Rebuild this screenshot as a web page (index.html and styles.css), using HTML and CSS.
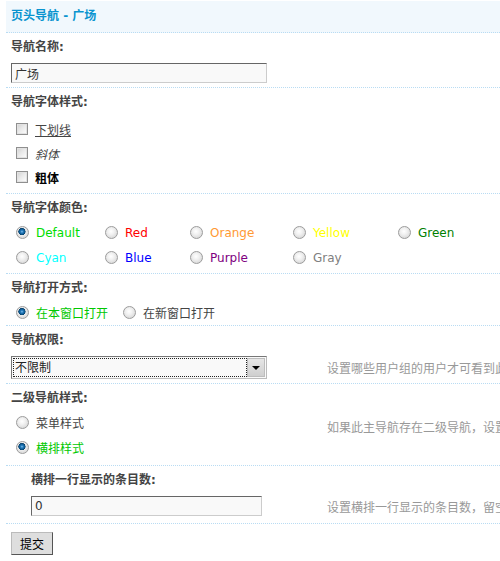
FILE: index.html
```html
<!DOCTYPE html>
<html lang="zh">
<head>
<meta charset="utf-8">
<title>页头导航 - 广场</title>
<link rel="stylesheet" href="styles.css">
</head>
<body>
<form class="wrap">
  <div class="hd">页头导航 - 广场</div>

  <div class="lbl">导航名称:</div>
  <div class="ctl row-name">
    <div class="field"><input class="txt" type="text" value="广场"></div>
  </div>

  <div class="lbl">导航字体样式:</div>
  <div class="ctl row-style">
    <label class="chk"><input class="ck" type="checkbox"><span class="u">下划线</span></label>
    <label class="chk"><input class="ck" type="checkbox"><span class="i">斜体</span></label>
    <label class="chk"><input class="ck" type="checkbox"><span class="b">粗体</span></label>
  </div>

  <div class="lbl">导航字体颜色:</div>
  <div class="ctl row-color">
    <label class="opt"><input class="rd" type="radio" name="c" checked><span class="c-default">Default</span></label>
    <label class="opt"><input class="rd" type="radio" name="c"><span class="c-red">Red</span></label>
    <label class="opt"><input class="rd" type="radio" name="c"><span class="c-orange">Orange</span></label>
    <label class="opt"><input class="rd" type="radio" name="c"><span class="c-yellow">Yellow</span></label>
    <label class="opt"><input class="rd" type="radio" name="c"><span class="c-green">Green</span></label>
    <label class="opt"><input class="rd" type="radio" name="c"><span class="c-cyan">Cyan</span></label>
    <label class="opt"><input class="rd" type="radio" name="c"><span class="c-blue">Blue</span></label>
    <label class="opt"><input class="rd" type="radio" name="c"><span class="c-purple">Purple</span></label>
    <label class="opt"><input class="rd" type="radio" name="c"><span class="c-gray">Gray</span></label>
  </div>

  <div class="lbl">导航打开方式:</div>
  <div class="ctl row-open">
    <label class="opt w1"><input class="rd" type="radio" name="o" checked><span class="on">在本窗口打开</span></label>
    <label class="opt"><input class="rd" type="radio" name="o"><span>在新窗口打开</span></label>
  </div>

  <div class="lbl">导航权限:</div>
  <div class="ctl row-perm">
    <div class="field">
      <div class="sel">
        <select class="selin"><option>不限制</option></select>
        <span class="arrow"></span>
      </div>
    </div>
    <div class="tip">设置哪些用户组的用户才可看到此导航</div>
  </div>

  <div class="lbl">二级导航样式:</div>
  <div class="ctl row-sub">
    <div class="field">
      <label class="opt"><input class="rd" type="radio" name="s"><span>菜单样式</span></label>
      <label class="opt"><input class="rd" type="radio" name="s" checked><span class="on">横排样式</span></label>
    </div>
    <div class="tip">如果此主导航存在二级导航，设置二级导航的显示样式</div>
  </div>

  <div class="lbl indent">横排一行显示的条目数:</div>
  <div class="ctl row-num">
    <div class="field"><input class="txt short" type="text" value="0"></div>
    <div class="tip">设置横排一行显示的条目数，留空或0为不限制</div>
  </div>

  <div class="submit"><button class="btn" type="button">提交</button></div>
</form>
</body>
</html>
```

FILE: styles.css
```css
html { overflow: hidden; }
body {
  margin: 0;
  font: 12px "DejaVu Sans", "Noto Sans CJK SC", sans-serif;
  color: #444;
  background: #fff;
}
.wrap {
  width: 820px;
  margin: 1px 0 0 6px;
}
.hd {
  height: 31px;
  line-height: 31px;
  padding-left: 5px;
  background: #f1f8fd;
  color: #0994cf;
  font-weight: bold;
  border-bottom: 1px dotted #b9dcf3;
}
.lbl {
  padding: 3px 5px 0;
  line-height: 22px;
  font-weight: bold;
  color: #444;
}
.lbl.indent { padding-left: 25px; }
.ctl {
  border-bottom: 1px dotted #b9dcf3;
  padding-left: 5px;
}
.field { width: 316px; flex: none; }
.tip { color: #999; }

.txt {
  box-sizing: border-box;
  width: 256px;
  height: 20px;
  margin: 0;
  padding: 0 3px;
  border: 1px solid;
  border-color: #666 #ccc #ccc #666;
  background: #f9f9f9;
  font: 12px "DejaVu Sans", "Noto Sans CJK SC", sans-serif;
  color: #333;
}
.txt.short { width: 231px; }

.row-name { padding-top: 5px; padding-bottom: 4px; }
.row-name .txt { display: block; }

.row-style { padding: 4px 5px 4px 10px; }
.chk {
  display: flex;
  align-items: center;
  gap: 7px;
  height: 24px;
}
.ck {
  appearance: none;
  -webkit-appearance: none;
  box-sizing: border-box;
  width: 12px;
  height: 12px;
  margin: 0;
  border: 1px solid #8f8f8f;
  box-shadow: inset 0 0 0 1px #e2e2e2;
  background: linear-gradient(135deg, #cfcfcf 0%, #e9e9e9 45%, #ffffff 100%);
}
.u { text-decoration: underline; }
.i { font-style: italic; }
.b { font-weight: bold; color: #000; }

.opt {
  display: flex;
  align-items: center;
  gap: 7px;
  height: 25px;
}
.rd {
  appearance: none;
  -webkit-appearance: none;
  box-sizing: border-box;
  width: 13px;
  height: 13px;
  margin: 0;
  flex: none;
  border-radius: 50%;
  border: 1px solid #9c9c9c;
  background: radial-gradient(circle at 45% 40%, #ffffff 0, #f1f1f1 35%, #cdcdcd 100%);
}
.rd:checked {
  background:
    radial-gradient(circle at 45% 42%, #8cc6ee 0, #2a7fc0 1.2px, #0c5a92 2.6px, #0a3f68 3.4px, rgba(255,255,255,0) 3.8px),
    radial-gradient(circle at 45% 40%, #ffffff 0, #f1f1f1 35%, #cdcdcd 100%);
}
.on { color: #00c800; }

.row-color {
  display: grid;
  grid-template-columns: 89px 85px 103px 105px 100px;
  padding: 1px 0 3px 10px;
}
.c-default { color: #00dd00; }
.c-red { color: #ff0000; }
.c-orange { color: #ff9933; }
.c-yellow { color: #ffff00; }
.c-green { color: #008000; }
.c-cyan { color: #00ffff; }
.c-blue { color: #0000ff; }
.c-purple { color: #800080; }
.c-gray { color: #808080; }

.row-open {
  display: flex;
  padding: 1px 0 0 10px;
}
.row-open .opt { height: 25px; }
.w1 { width: 107px; }

.row-perm {
  display: flex;
  align-items: center;
  padding-top: 5px;
  padding-bottom: 4px;
}
.sel {
  box-sizing: border-box;
  display: flex;
  width: 256px;
  height: 23px;
  padding: 1px;
  border: 1px solid;
  border-color: #777 #bbb #bbb #777;
  background: #f9f9f9;
}
.selin {
  appearance: none;
  -webkit-appearance: none;
  flex: 1;
  min-width: 0;
  margin: 0;
  padding: 0 1px;
  border: 1px dotted #222;
  border-radius: 0;
  background: transparent;
  font: 12px "DejaVu Sans", "Noto Sans CJK SC", sans-serif;
  color: #222;
}
.arrow {
  position: relative;
  flex: none;
  width: 18px;
  background: linear-gradient(#e6e6e6, #cfcfcf);
  border: 1px solid #bdbdbd;
  box-sizing: border-box;
}
.arrow::after {
  content: "";
  position: absolute;
  left: 4px;
  top: 7px;
  border-left: 4px solid transparent;
  border-right: 4px solid transparent;
  border-top: 4px solid #000;
}

.row-sub {
  display: flex;
  align-items: flex-start;
  padding-top: 1px;
  padding-bottom: 5px;
}
.row-sub .field { padding-left: 5px; box-sizing: border-box; }
.row-sub .tip { padding-top: 11px; line-height: 14px; }

.row-num {
  display: flex;
  align-items: center;
  padding: 5px 0 7px 25px;
}
.row-num .field { width: 296px; }
.row-num .txt { display: block; }

.submit { padding: 8px 5px 0; }
.btn {
  box-sizing: border-box;
  width: 42px;
  height: 23px;
  margin: 0;
  padding: 0;
  border: 1px solid;
  border-color: #bbb #555 #555 #bbb;
  background: #dedede;
  font: 12px "DejaVu Sans", "Noto Sans CJK SC", sans-serif;
  color: #000;
}
```
